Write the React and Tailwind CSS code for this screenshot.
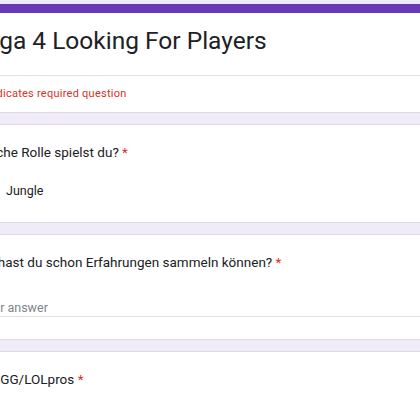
export default function App() {
  return (
    <div
      className="w-[420px] h-[420px] overflow-hidden bg-[#f0ebf8]"
      style={{ fontFamily: 'Roboto, "Liberation Sans", sans-serif' }}
    >
      <div className="ml-[-27px] w-[480px] pt-[4px] flex flex-col">
        {/* Header card */}
        <div className="bg-white border-x border-b border-[#dadce0] rounded-b-lg overflow-hidden">
          <div className="h-[9px] bg-[#673ab7]" />
          <div className="pl-[6px] pt-[13px] h-[63px] border-b border-[#e0e0e0]">
            <h1 className="text-[24.5px] leading-[30px] text-[#202124]">Liga 4 Looking For Players</h1>
          </div>
          <div className="h-[36px] flex items-center pl-[5px]">
            <p className="text-[11px] tracking-[0.25px] text-[#d93025]">* Indicates required question</p>
          </div>
        </div>

        {/* Question: role */}
        <div className="mt-[11px] h-[99px] bg-white border border-[#dadce0] rounded-lg pt-[18px]">
          <p className="text-[13.5px] leading-[18px] text-[#202124]">
            Welche Rolle spielst du? <span className="text-[#d93025]">*</span>
          </p>
          <div className="mt-[20px] flex items-center gap-[12px]">
            <span className="w-[20px] h-[20px] rounded-full border-2 border-[#5f6368]" />
            <span className="text-[12.5px] text-[#202124]">Jungle</span>
          </div>
        </div>

        {/* Question: experience */}
        <div className="mt-[11px] h-[106px] bg-white border border-[#dadce0] rounded-lg pt-[18px]">
          <p className="text-[13.5px] leading-[18px] text-[#202124] pl-[1px]">
            Wo hast du schon Erfahrungen sammeln können? <span className="text-[#d93025]">*</span>
          </p>
          <div className="mt-[28px] w-[460px] border-b border-[#e0e0e0] pl-[5px]">
            <span className="block text-[12.5px] leading-[17px] text-[#80868b]">Your answer</span>
          </div>
        </div>

        {/* Question: op.gg */}
        <div className="mt-[11px] h-[106px] bg-white border border-[#dadce0] rounded-lg pt-[18px]">
          <p className="text-[13.5px] leading-[18px] text-[#202124] pl-[7px]">
            OP.GG/LOLpros <span className="text-[#d93025]">*</span>
          </p>
          <div className="mt-[28px] w-[460px] border-b border-[#e0e0e0] pl-[5px]">
            <span className="block text-[12.5px] leading-[17px] text-[#80868b]">Your answer</span>
          </div>
        </div>
      </div>
    </div>
  );
}
